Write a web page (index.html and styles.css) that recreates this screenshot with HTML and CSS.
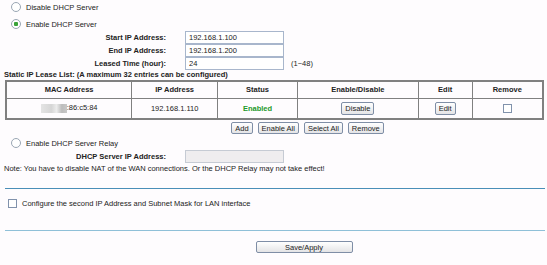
FILE: index.html
```html
<!DOCTYPE html>
<html lang="en">
<head>
  <meta charset="UTF-8">
  <link rel="stylesheet" href="styles.css">
  <title>DHCP</title>
</head>
<body>
  <div class="page">
    <div class="radioRow first">
      <input class="radio" type="radio" name="dhcp">
      <span>Disable DHCP Server</span>
    </div>
    <div class="radioRow">
      <input class="radio" type="radio" name="dhcp" checked>
      <span>Enable DHCP Server</span>
    </div>

    <div class="fields">
      <div class="field">
        <label>Start IP Address:</label>
        <input class="box" type="text" value="192.168.1.100">
      </div>
      <div class="field">
        <label>End IP Address:</label>
        <input class="box" type="text" value="192.168.1.200">
      </div>
      <div class="field">
        <label>Leased Time (hour):</label>
        <input class="box" type="text" value="24">
        <span class="hint">(1~48)</span>
      </div>
    </div>

    <div class="listTitle">Static IP Lease List: (A maximum 32 entries can be configured)</div>
    <table class="lease">
      <tr>
        <th class="cMac">MAC Address</th>
        <th class="cIp">IP Address</th>
        <th class="cStatus">Status</th>
        <th class="cToggle">Enable/Disable</th>
        <th class="cEdit">Edit</th>
        <th class="cRemove">Remove</th>
      </tr>
      <tr>
        <td><span class="blur"></span>:86:c5:84</td>
        <td>192.168.1.110</td>
        <td class="ok">Enabled</td>
        <td><button class="btn">Disable</button></td>
        <td><button class="btn">Edit</button></td>
        <td><input class="check" type="checkbox"></td>
      </tr>
    </table>
    <div class="tableBtns">
      <button class="btn">Add</button>
      <button class="btn">Enable All</button>
      <button class="btn">Select All</button>
      <button class="btn">Remove</button>
    </div>

    <div class="radioRow relay">
      <input class="radio" type="radio" name="relay">
      <span>Enable DHCP Server Relay</span>
    </div>
    <div class="field">
      <label>DHCP Server IP Address:</label>
      <input class="box" type="text" disabled>
    </div>
    <div class="note">Note: You have to disable NAT of the WAN connections. Or the DHCP Relay may not take effect!</div>

    <div class="line dark"></div>

    <div class="checkRow">
      <input class="check" type="checkbox">
      <span>Configure the second IP Address and Subnet Mask for LAN interface</span>
    </div>

    <div class="line light"></div>

    <div class="save">
      <button class="btn saveBtn">Save/Apply</button>
    </div>
  </div>
</body>
</html>
```

FILE: styles.css
```css
* {
  margin: 0;
  padding: 0;
  box-sizing: border-box;
}

body {
  background-color: #fefcfe;
  font-family: "Liberation Sans", Arial, sans-serif;
  font-size: 7.5px;
  color: #222;
}

.page {
  width: 547px;
  padding: 0 2px 0 4px;
}

.radioRow {
  height: 14px;
  display: flex;
  align-items: center;
  padding-left: 7px;
  margin-top: 3px;
}

.radioRow.first {
  margin-top: 0;
}

.radio {
  appearance: none;
  width: 10px;
  height: 10px;
  border: 1px solid #9aa6b4;
  border-radius: 50%;
  background: #fff;
  margin-right: 5px;
}

.radio:checked {
  background: radial-gradient(circle, #3aa33a 0, #3aa33a 2px, #fff 2.5px);
}

.fields {
  display: flex;
  flex-direction: column;
}

.field {
  height: 13px;
  display: flex;
  align-items: center;
}

.field label {
  width: 162px;
  text-align: right;
  font-weight: bold;
  margin-right: 19px;
}

.box {
  width: 99px;
  height: 13px;
  border: 1px solid #a8b6cc;
  background: #fff;
  font-family: inherit;
  font-size: 7.5px;
  padding: 0 3px;
  color: #222;
}

.box:disabled {
  background: #efedef;
  border-color: #c6cbd4;
}

.hint {
  margin-left: 7px;
}

.listTitle {
  font-weight: bold;
  height: 10px;
  line-height: 10px;
}

.lease {
  width: 539px;
  margin-left: 1px;
  border-collapse: collapse;
  border: 2px solid #808080;
}

.lease th,
.lease td {
  border: 1px solid #808080;
  text-align: center;
  font-size: 7.5px;
}

.lease th {
  height: 17px;
}

.lease td {
  height: 21px;
}

.cMac { width: 126px; }
.cIp { width: 86px; }
.cStatus { width: 80px; }
.cToggle { width: 121px; }
.cEdit { width: 54px; }
.cRemove { width: 71px; }

.blur {
  display: inline-block;
  width: 26px;
  height: 9px;
  vertical-align: middle;
  background: linear-gradient(90deg, #e4e4e4 0, #d6d6d6 40%, #ececec 60%, #bcbcbc 80%, #c8c8c8 100%);
}

.ok {
  color: #22992a;
  font-weight: bold;
}

.btn {
  font-family: inherit;
  font-size: 7.5px;
  height: 12px;
  padding: 0 3px;
  border: 1px solid #7f8ea6;
  border-radius: 2px;
  background: linear-gradient(#ffffff, #e4e4e6);
  color: #222;
}

.lease .btn {
  height: 13px;
}

.check {
  appearance: none;
  width: 9px;
  height: 9px;
  border: 1px solid #8192ac;
  background: #fff;
  vertical-align: middle;
}

.tableBtns {
  display: flex;
  justify-content: center;
  gap: 5px;
  margin-top: 2px;
  height: 13px;
  padding-left: 66px;
}

.relay {
  margin-top: 1px;
}

.note {
  height: 11px;
  line-height: 11px;
}

.line {
  margin-left: 1px;
  height: 0;
}

.line.dark {
  border-top: 1px solid #4a8fb8;
  margin-top: 14px;
}

.line.light {
  border-top: 1px solid #8fc0d8;
  margin-top: 21px;
}

.checkRow {
  display: flex;
  align-items: center;
  gap: 5px;
  height: 12px;
  margin-top: 8px;
  padding-left: 4px;
}

.save {
  display: flex;
  justify-content: center;
  margin-top: 10px;
  padding-left: 59px;
}

.saveBtn {
  width: 97px;
}
```
